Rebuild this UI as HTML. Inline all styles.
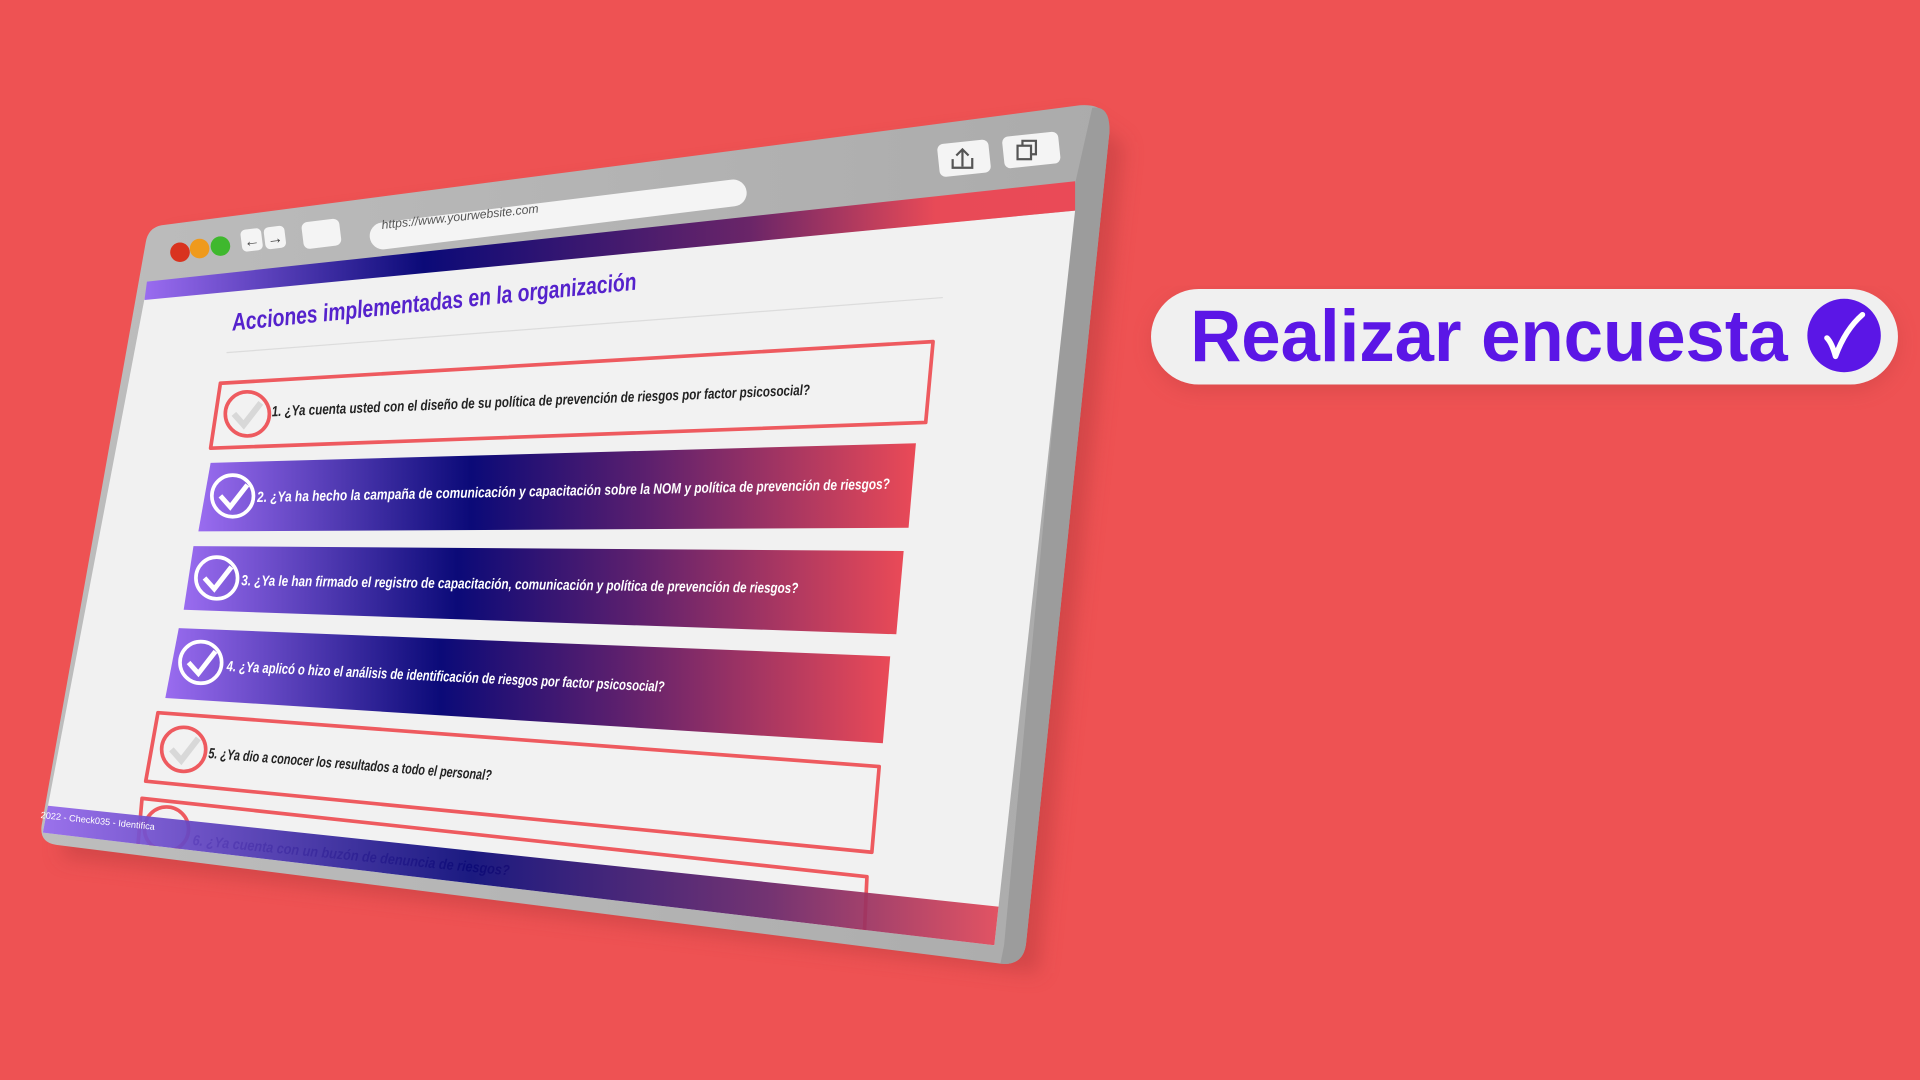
<!DOCTYPE html>
<html><head><meta charset="utf-8"><style>
html,body{margin:0;padding:0;width:1920px;height:1080px;overflow:hidden;background:#ee5253}
svg{display:block}
text{font-family:"Liberation Sans",sans-serif}
</style></head><body>
<svg width="1920" height="1080" viewBox="0 0 1568 882" preserveAspectRatio="none">
<defs>
<linearGradient id="rg" x1="0" y1="0" x2="1" y2="0">
<stop offset="0" stop-color="#9a6cf0"/><stop offset="0.38" stop-color="#0b0a78"/><stop offset="0.62" stop-color="#5a1f6e"/><stop offset="1" stop-color="#ea4a57"/></linearGradient>
<linearGradient id="bg2" x1="0" y1="0" x2="1" y2="0">
<stop offset="0" stop-color="#9a6cf0"/><stop offset="0.45" stop-color="#0b0a78"/><stop offset="0.75" stop-color="#6a2568"/><stop offset="1" stop-color="#ea4a57"/></linearGradient>
<linearGradient id="tg" x1="0" y1="0" x2="1" y2="0">
<stop offset="0" stop-color="#9a6cf0"/><stop offset="0.3" stop-color="#0b0a78"/><stop offset="0.65" stop-color="#6a2568"/><stop offset="0.85" stop-color="#e84a57"/><stop offset="1" stop-color="#ea4a57"/></linearGradient>
<linearGradient id="fr" x1="0" y1="0" x2="1" y2="0"><stop offset="0" stop-color="#bdbdbd"/><stop offset="1" stop-color="#ababab"/></linearGradient>
<filter id="sh" x="-10%" y="-10%" width="130%" height="130%"><feGaussianBlur stdDeviation="8"/></filter>
<clipPath id="cc"><path d="M118,244 L878,172 L812,772 L35,680 Z"/></clipPath>
</defs>
<rect width="1568" height="882" fill="#ee5253"/>
<path d="M140,195 L885,96 L918,118 L848,795 L50,700 Z" fill="#b83a3e" opacity="0.5" filter="url(#sh)"/>
<path d="M132,184 L882,86 Q907,84 906,108 L838,770 Q836,789 817,787 L46,690 Q32,688 34,674 L119,198 Q121,186 132,184 Z" fill="url(#fr)"/>
<path d="M892,88 Q907,86 906,108 L838,770 Q836,789 817,787 L820,772 L878,150 Z" fill="#9c9c9c"/>
<path d="M118,244 L878,172 L812,772 L35,680 Z" fill="#f1f1f1"/>
<path d="M120,230 L878,148 L878,172 L118,245 Z" fill="url(#tg)"/>
<!-- toolbar -->
<circle cx="147" cy="206" r="8" fill="#d9331f"/>
<circle cx="163" cy="203" r="8" fill="#ef9a1c"/>
<circle cx="180" cy="201" r="8" fill="#3fb82e"/>
<g transform="rotate(-7 205 196)"><rect x="197" y="187" width="17" height="18" rx="4" fill="#f4f4f4"/><text x="199" y="201" font-size="13" fill="#444">←</text></g>
<g transform="rotate(-7 224 194)"><rect x="216" y="185" width="17" height="18" rx="4" fill="#f4f4f4"/><text x="218" y="199" font-size="13" fill="#444">→</text></g>
<rect x="247" y="180" width="31" height="22" rx="5" fill="#f4f4f4" transform="rotate(-7 262 191)"/>
<rect x="302" y="183" width="310" height="22" rx="11" fill="#f4f4f4" transform="rotate(-7 302 194)"/>
<text x="312" y="187" font-size="10" font-style="italic" fill="#555" transform="rotate(-6 312 187)">https://www.yourwebsite.com</text>
<rect x="765" y="118" width="42" height="27" rx="5" fill="#f4f4f4" transform="rotate(-6 765 118)"/>
<rect x="818" y="112" width="46" height="26" rx="5" fill="#f4f4f4" transform="rotate(-6 818 112)"/>
<path d="M778,130 v7 h16 v-8 M786,136 v-13 M781,127 l5,-5 l5,5" stroke="#555" stroke-width="1.8" fill="none"/>
<rect x="831" y="119" width="11" height="11" fill="none" stroke="#555" stroke-width="1.8"/>
<path d="M835,119 v-4 h11 v11 h-4" fill="none" stroke="#555" stroke-width="1.8"/>
<!-- title -->
<text x="190" y="270" font-size="20" font-weight="bold" font-style="italic" fill="#5522cc" textLength="332" lengthAdjust="spacingAndGlyphs" transform="rotate(-5.8 190 270)">Acciones implementadas en la organización</text>
<line x1="185" y1="288" x2="770" y2="243" stroke="#dcdcdc" stroke-width="1"/>
<g clip-path="url(#cc)">
<path d="M180,313 L762,279 L756,345 L172,366 Z" fill="#f2f2f2" stroke="#ee5a5f" stroke-width="3" stroke-linejoin="round"/>
<circle cx="202" cy="338" r="18" fill="#f2f2f2" stroke="#ee5a5f" stroke-width="3"/>
<path d="M191,338 l8,9 l14,-18" stroke="#d8d8d8" stroke-width="5" fill="none"/>
<text x="222" y="340" font-size="12" font-weight="bold" font-style="italic" fill="#222" textLength="440" lengthAdjust="spacingAndGlyphs" transform="rotate(-2.3 222 340)">1. ¿Ya cuenta usted con el diseño de su política de prevención de riesgos por factor psicosocial?</text>

<path d="M172,378 L748,362 L742,431 L162,434 Z" fill="url(#rg)"/>
<circle cx="190" cy="405" r="17" fill="none" stroke="#fff" stroke-width="3"/>
<path d="M180,405 l8,9 l14,-18" stroke="#fff" stroke-width="4" fill="none"/>
<text x="210" y="410" font-size="12" font-weight="bold" font-style="italic" fill="#fff" textLength="517" lengthAdjust="spacingAndGlyphs" transform="rotate(-1.2 210 410)">2. ¿Ya ha hecho la campaña de comunicación y capacitación sobre la NOM y política de prevención de riesgos?</text>

<path d="M158,446 L738,450 L732,518 L150,498 Z" fill="url(#rg)"/>
<circle cx="177" cy="472" r="17" fill="none" stroke="#fff" stroke-width="3"/>
<path d="M167,472 l8,9 l14,-18" stroke="#fff" stroke-width="4" fill="none"/>
<text x="197" y="478" font-size="12" font-weight="bold" font-style="italic" fill="#fff" textLength="455" lengthAdjust="spacingAndGlyphs" transform="rotate(0.8 197 478)">3. ¿Ya le han firmado el registro de capacitación, comunicación y política de prevención de riesgos?</text>

<path d="M146,513 L727,536 L721,607 L135,570 Z" fill="url(#rg)"/>
<circle cx="164" cy="541" r="17" fill="none" stroke="#fff" stroke-width="3"/>
<path d="M154,541 l8,9 l14,-18" stroke="#fff" stroke-width="4" fill="none"/>
<text x="185" y="548" font-size="12" font-weight="bold" font-style="italic" fill="#fff" textLength="358" lengthAdjust="spacingAndGlyphs" transform="rotate(2.7 185 548)">4. ¿Ya aplicó o hizo el análisis de identificación de riesgos por factor psicosocial?</text>

<path d="M129,582 L718,626 L712,696 L119,638 Z" fill="#f2f2f2" stroke="#ee5a5f" stroke-width="3" stroke-linejoin="round"/>
<circle cx="150" cy="612" r="18" fill="#f2f2f2" stroke="#ee5a5f" stroke-width="3"/>
<path d="M140,612 l8,9 l14,-18" stroke="#d8d8d8" stroke-width="5" fill="none"/>
<text x="170" y="619" font-size="12" font-weight="bold" font-style="italic" fill="#222" textLength="232" lengthAdjust="spacingAndGlyphs" transform="rotate(4.5 170 619)">5. ¿Ya dio a conocer los resultados a todo el personal?</text>

<path d="M116,652 L708,716 L706,760 L110,720 Z" fill="#f2f2f2" stroke="#ee5a5f" stroke-width="3" stroke-linejoin="round"/>
<circle cx="136" cy="677" r="18" fill="none" stroke="#ee5a5f" stroke-width="3"/>
<text x="157" y="690" font-size="12" font-weight="bold" font-style="italic" fill="#2a1a70" textLength="260" lengthAdjust="spacingAndGlyphs" transform="rotate(5.5 157 690)">6. ¿Ya cuenta con un buzón de denuncia de riesgos?</text>
<path d="M20,656 L830,742 L830,790 L20,700 Z" fill="url(#bg2)" opacity="0.93"/>
</g>
<text x="33" y="668" font-size="7.5" fill="#fff" transform="rotate(6 33 668)">2022 - Check035 - Identifica</text>
<!-- pill -->
<rect x="941" y="237" width="609" height="78" rx="39" fill="#b83a3e" opacity="0.35" filter="url(#sh)" transform="translate(0,4)"/>
<rect x="940" y="236" width="610" height="78" rx="39" fill="#f0f0f0"/>
<text x="972" y="295" font-size="60" font-weight="bold" fill="#5b16e6" textLength="488" lengthAdjust="spacingAndGlyphs">Realizar encuesta</text>
<circle cx="1506" cy="274" r="30" fill="#5b16e6"/>
<path d="M1492,276 q4,4 7,15 q8,-22 22,-34" stroke="#fff" stroke-width="4.5" fill="none" stroke-linecap="round" stroke-linejoin="round"/>
</svg>
</body></html>
